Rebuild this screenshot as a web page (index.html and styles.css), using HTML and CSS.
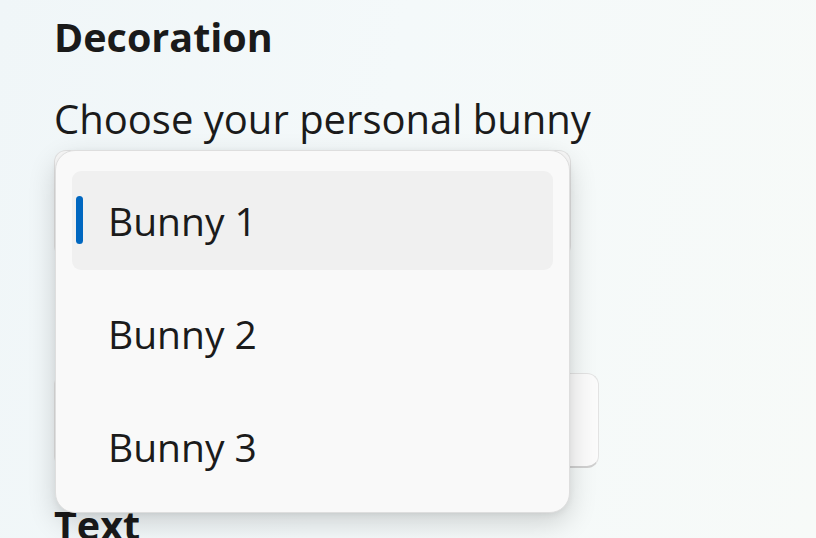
FILE: index.html
```html
<!DOCTYPE html>
<html lang="en">
<head>
<meta charset="utf-8">
<title>Decoration</title>
<link rel="stylesheet" href="styles.css">
</head>
<body>
<div class="page">
  <h2 class="heading">Decoration</h2>
  <div class="label">Choose your personal bunny</div>
  <div class="combo"></div>
  <div class="textbox"></div>
  <h2 class="heading heading-text">Text</h2>

  <div class="popup">
    <div class="item selected"><span class="indicator"></span>Bunny 1</div>
    <div class="item">Bunny 2</div>
    <div class="item">Bunny 3</div>
  </div>
</div>
</body>
</html>
```

FILE: styles.css
```css
html, body {
  margin: 0;
  padding: 0;
}
body {
  font-family: "Open Sans", "Noto Sans", sans-serif;
  color: #1b1b1b;
}
.page {
  position: relative;
  width: 816px;
  height: 538px;
  overflow: hidden;
  box-sizing: border-box;
  padding: 14px 0 0 54px;
  background: linear-gradient(100deg, #f0f6f8 0%, #f4f9fa 45%, #f7faf8 100%);
  display: flex;
  flex-direction: column;
  align-items: flex-start;
}
.page > * {
  flex-shrink: 0;
}
.heading {
  margin: 0;
  font-size: 39.5px;
  line-height: 46px;
  font-weight: 700;
  color: #1a1a1a;
}
.label {
  margin-top: 33px;
  font-size: 40px;
  line-height: 52px;
  color: #1b1b1b;
}
.combo {
  margin-top: 5px;
  width: 517px;
  height: 108px;
  box-sizing: border-box;
  border: 1px solid #e3e3e3;
  border-bottom-color: #cfcfcf;
  border-radius: 12px;
  background: #fbfbfb;
}
.textbox {
  margin-top: 115px;
  width: 545px;
  height: 95px;
  box-sizing: border-box;
  border: 1px solid #e3e3e3;
  border-bottom: 2px solid #d0d0d0;
  border-radius: 12px;
  background: #fbfbfb;
}
.heading-text {
  margin-top: 34px;
}
.popup {
  position: absolute;
  left: 55px;
  top: 150px;
  width: 515px;
  height: 363px;
  box-sizing: border-box;
  padding: 20px 16px 18px 16px;
  background: #f9f9f9;
  border: 1px solid #dedede;
  border-radius: 20px;
  box-shadow: 0 10px 28px rgba(0, 0, 0, 0.16), 0 2px 6px rgba(0, 0, 0, 0.06);
  display: flex;
  flex-direction: column;
  gap: 14px;
}
.item {
  position: relative;
  flex-shrink: 0;
  height: 99px;
  border-radius: 9px;
  padding-left: 36px;
  display: flex;
  align-items: center;
  font-size: 39px;
  color: #1b1b1b;
}
.item.selected {
  background: #f0f0f0;
}
.indicator {
  position: absolute;
  left: 4px;
  top: 25px;
  width: 7px;
  height: 48px;
  border-radius: 4px;
  background: #0067c0;
}
```
